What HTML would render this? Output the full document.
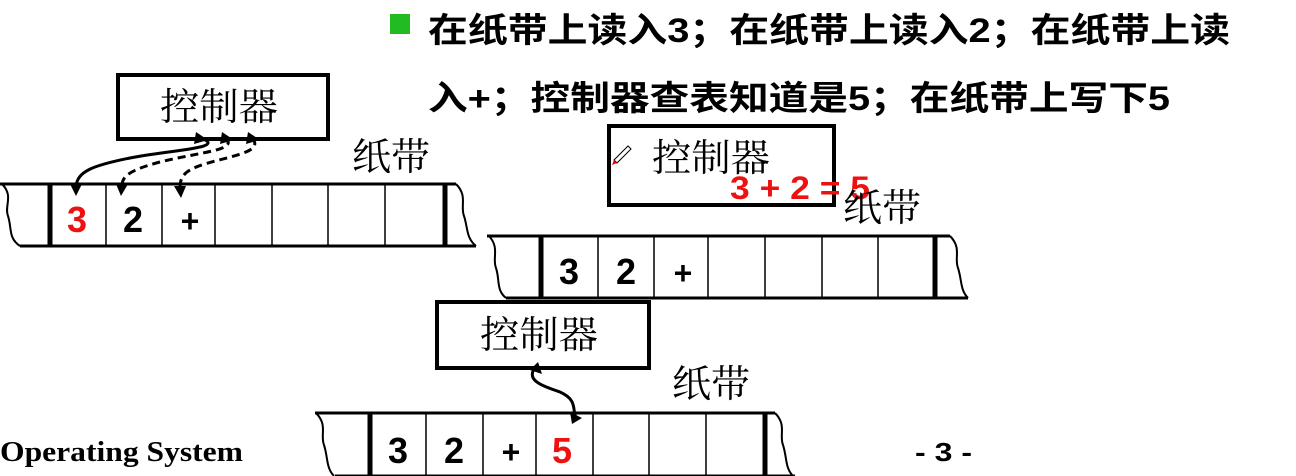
<!DOCTYPE html>
<html><head><meta charset="utf-8"><style>
html,body{margin:0;padding:0;background:#fff;width:1296px;height:476px;overflow:hidden}
svg{display:block}
.cj{font-family:"Liberation Sans","Noto Sans CJK SC",sans-serif}
.sf{font-family:"Noto Serif CJK SC","Liberation Serif",serif}
</style></head><body>
<svg width="1296" height="476" viewBox="0 0 1296 476" xmlns="http://www.w3.org/2000/svg">
<rect x="390" y="14" width="20" height="20" fill="#22bb22"/>
<text x="428" y="42" font-size="34" class="cj" font-weight="bold" fill="#000" textLength="802" lengthAdjust="spacingAndGlyphs">在纸带上读入3；在纸带上读入2；在纸带上读</text>
<text x="428" y="110" font-size="34" class="cj" font-weight="bold" fill="#000" textLength="742" lengthAdjust="spacingAndGlyphs">入+；控制器查表知道是5；在纸带上写下5</text>

<!-- box 1 -->
<rect x="118" y="75" width="210" height="64" fill="#fff" stroke="#000" stroke-width="4"/>
<text x="160" y="120" font-size="38" class="sf" fill="#000" textLength="118" lengthAdjust="spacingAndGlyphs">控制器</text>
<text x="352" y="170" font-size="38" class="sf" fill="#000" textLength="78" lengthAdjust="spacingAndGlyphs">纸带</text>

<!-- tape 1 -->
<g stroke="#000" fill="none">
<path d="M0 184 H456 M20 246 H476" stroke-width="3"/>
<path d="M2 184 C14 196,4 206,8 216 C12 228,8 238,20 246" stroke-width="2"/>
<path d="M456 184 C468 196,460 206,464 216 C468 228,466 238,476 246" stroke-width="2"/>
<path d="M50 184V246 M445 184V246" stroke-width="5"/>
<path d="M106 184V246 M162 184V246 M215 184V246 M272 184V246 M328 184V246 M385 184V246" stroke-width="1.5"/>
<path d="M200 138 C230 148,170 150,130 158 C90 166,78 172,76 186" stroke-width="3"/>
<path d="M225 138 C240 150,200 152,160 162 C130 170,122 176,122 186" stroke-width="3" stroke-dasharray="8,5"/>
<path d="M252 138 C265 152,230 156,205 164 C185 170,180 176,180 188" stroke-width="3" stroke-dasharray="8,5"/>
</g>
<g fill="#000">
<path d="M196 132 L208 140 L194 144Z"/><path d="M222 132 L234 140 L220 144Z"/><path d="M248 132 L260 140 L246 144Z"/>
<path d="M70 184 L82 184 L76 196Z"/><path d="M116 184 L128 184 L121 196Z"/><path d="M174 186 L186 186 L181 198Z"/>
</g>
<text x="77" y="232" font-size="36" class="cj" font-weight="bold" fill="#ee1111" text-anchor="middle">3</text>
<text x="133" y="232" font-size="36" class="cj" font-weight="bold" fill="#000" text-anchor="middle">2</text>
<text x="190" y="232" font-size="32" class="cj" font-weight="bold" fill="#000" text-anchor="middle">+</text>

<!-- box 2 -->
<rect x="609" y="126" width="225" height="79" fill="#fff" stroke="#000" stroke-width="4"/>
<path d="M614 160 L628 146 L631 149 L617 163Z" fill="#fff" stroke="#000" stroke-width="1"/>
<path d="M614 160 L617 163 L612 165Z" fill="#e00"/>
<text x="652" y="171" font-size="38" class="sf" fill="#000" textLength="118" lengthAdjust="spacingAndGlyphs">控制器</text>
<text x="730" y="199" font-size="32" class="cj" font-weight="bold" fill="#ee1111" textLength="140" lengthAdjust="spacingAndGlyphs">3 + 2 = 5</text>
<text x="843" y="221" font-size="38" class="sf" fill="#000" textLength="78" lengthAdjust="spacingAndGlyphs">纸带</text>

<!-- tape 2 -->
<g stroke="#000" fill="none">
<path d="M487 236 H950 M506 298 H968" stroke-width="3"/>
<path d="M489 236 C500 248,492 258,496 268 C500 280,496 290,506 298" stroke-width="2"/>
<path d="M950 236 C962 248,954 258,958 268 C962 280,960 290,968 298" stroke-width="2"/>
<path d="M541 236V298 M935 236V298" stroke-width="5"/>
<path d="M598 236V298 M654 236V298 M708 236V298 M765 236V298 M822 236V298 M878 236V298" stroke-width="1.5"/>
</g>
<text x="569" y="284" font-size="36" class="cj" font-weight="bold" fill="#000" text-anchor="middle">3</text>
<text x="626" y="284" font-size="36" class="cj" font-weight="bold" fill="#000" text-anchor="middle">2</text>
<text x="683" y="284" font-size="32" class="cj" font-weight="bold" fill="#000" text-anchor="middle">+</text>

<!-- box 3 -->
<rect x="437" y="302" width="212" height="66" fill="#fff" stroke="#000" stroke-width="4"/>
<text x="480" y="348" font-size="38" class="sf" fill="#000" textLength="118" lengthAdjust="spacingAndGlyphs">控制器</text>
<text x="672" y="397" font-size="38" class="sf" fill="#000" textLength="78" lengthAdjust="spacingAndGlyphs">纸带</text>
<g stroke="#000" fill="none">
<path d="M536 366 C525 380,540 385,560 392 C578 400,572 410,576 418" stroke-width="3"/>
</g>
<path d="M530 370 L538 362 L542 374Z M570 412 L582 418 L572 424Z" fill="#000"/>

<!-- tape 3 -->
<g stroke="#000" fill="none">
<path d="M315 413 H775 M335 476 H795" stroke-width="3"/>
<path d="M316 413 C328 425,320 435,324 445 C328 457,326 468,334 476" stroke-width="2"/>
<path d="M775 413 C787 425,779 435,783 445 C787 457,785 468,793 476" stroke-width="2"/>
<path d="M370 413V476 M765 413V476" stroke-width="5"/>
<path d="M426 413V476 M483 413V476 M536 413V476 M593 413V476 M649 413V476 M706 413V476" stroke-width="1.5"/>
</g>
<text x="398" y="463" font-size="36" class="cj" font-weight="bold" fill="#000" text-anchor="middle">3</text>
<text x="454" y="463" font-size="36" class="cj" font-weight="bold" fill="#000" text-anchor="middle">2</text>
<text x="511" y="463" font-size="32" class="cj" font-weight="bold" fill="#000" text-anchor="middle">+</text>
<text x="562" y="463" font-size="36" class="cj" font-weight="bold" fill="#ee1111" text-anchor="middle">5</text>

<text x="0" y="461" font-size="29" font-family="Liberation Serif, serif" font-weight="bold" fill="#000" textLength="243" lengthAdjust="spacingAndGlyphs">Operating System</text>
<text x="915" y="461" font-size="26" font-family="Liberation Sans, sans-serif" font-weight="bold" fill="#000" textLength="57" lengthAdjust="spacingAndGlyphs">- 3 -</text>
</svg>
</body></html>
